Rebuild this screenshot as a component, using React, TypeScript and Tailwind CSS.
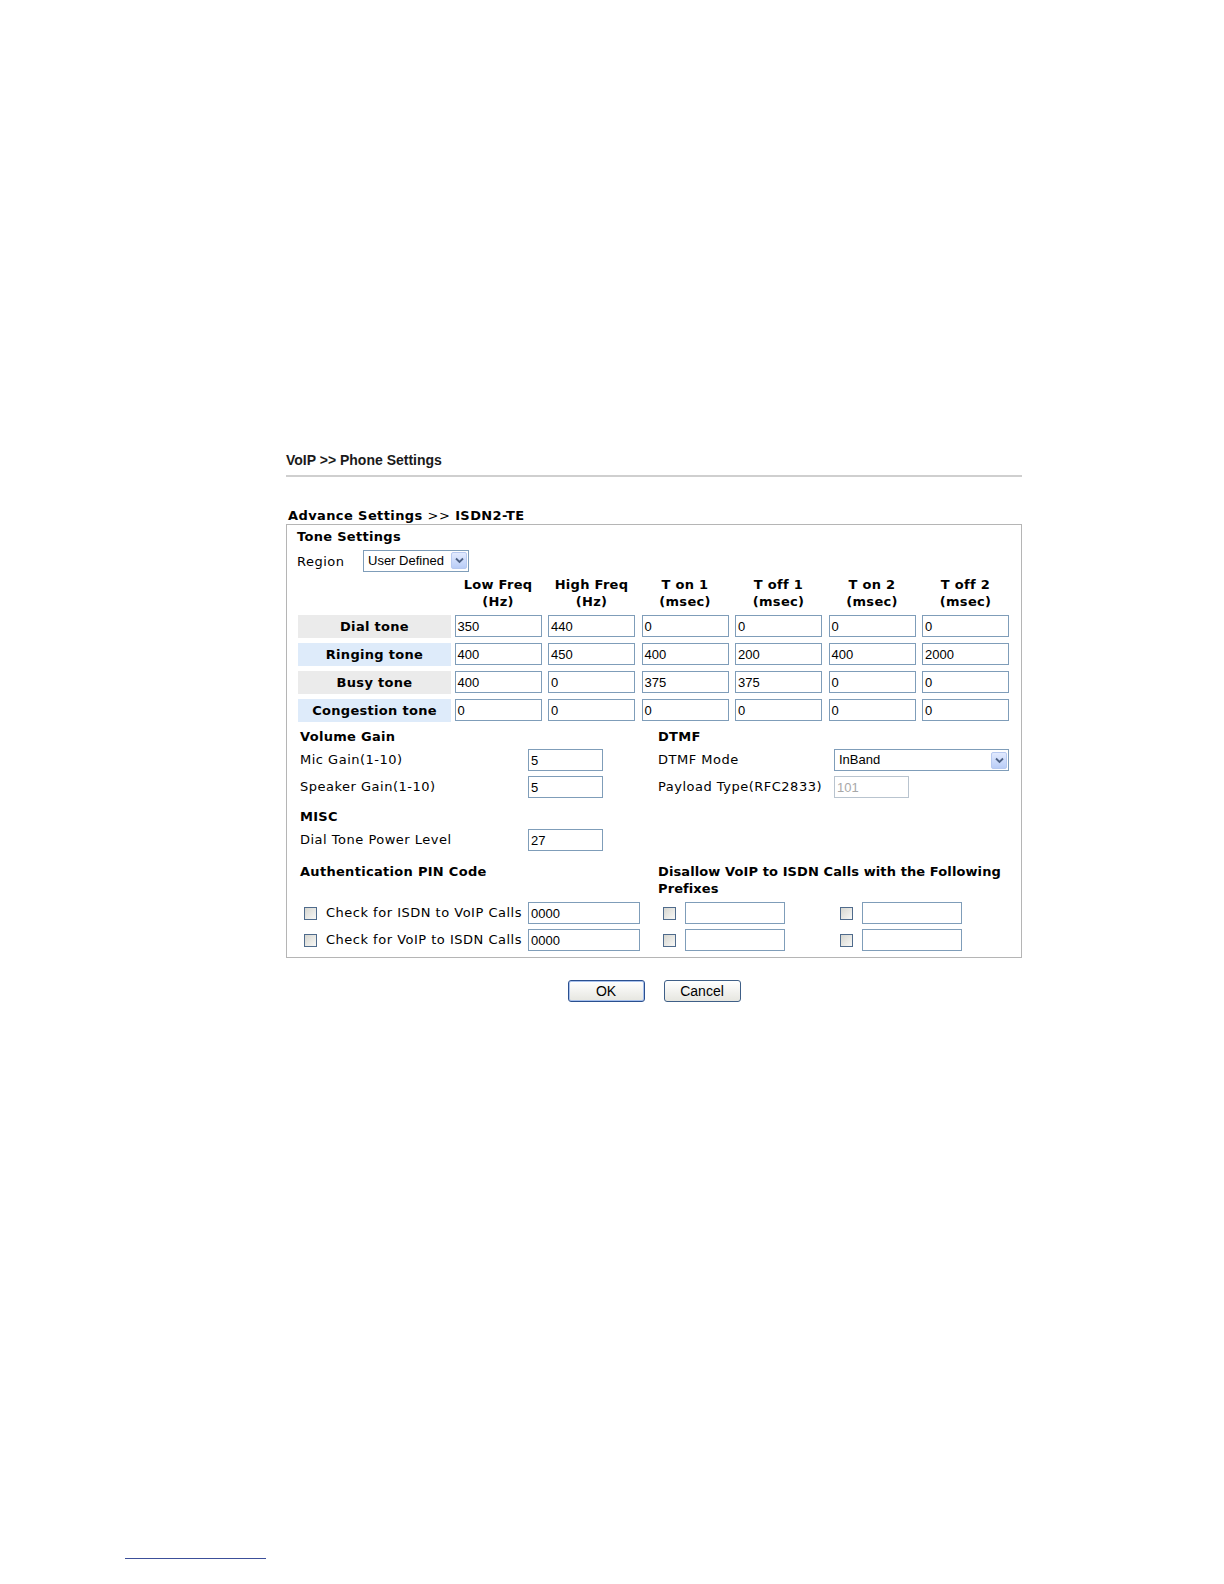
import React from "react";

const sans = { fontFamily: '"DejaVu Sans", Verdana, sans-serif' };

function TextBox({ value, w, disabled }: { value: string; w: string; disabled?: boolean }) {
  return (
    <div
      className={`${w} h-[22px] border bg-white flex items-center pl-[2px] text-[13px] leading-none tracking-normal ${
        disabled ? "border-[#b9c4cf] text-[#a8a8a8]" : "border-[#7f9db9] text-black"
      }`}
      style={{ fontFamily: '"Liberation Sans", Arial, sans-serif' }}
    >
      {value}
    </div>
  );
}

function DropArrow() {
  return (
    <div className="w-[16px] h-[17px] mr-[1px] rounded-[2px] border border-[#b7c9f0] bg-gradient-to-b from-[#e2eafe] to-[#b9cdf7] flex items-center justify-center">
      <svg width="9" height="7" viewBox="0 0 9 7">
        <path d="M1 1.5 L4.5 5 L8 1.5" fill="none" stroke="#4d6185" strokeWidth="1.8" />
      </svg>
    </div>
  );
}

function Select({ value, w }: { value: string; w: string }) {
  return (
    <div
      className={`${w} h-[22px] border border-[#7f9db9] bg-white flex items-center justify-between pl-[4px] text-[13px] tracking-normal`}
      style={{ fontFamily: '"Liberation Sans", Arial, sans-serif' }}
    >
      <span>{value}</span>
      <DropArrow />
    </div>
  );
}

function Check() {
  return <div className="w-[13px] h-[13px] border border-[#4f6b8c] bg-gradient-to-br from-[#d6d6d0] to-[#f8f8f6]" />;
}

function Btn({ label, focus }: { label: string; focus?: boolean }) {
  return (
    <div
      className={`w-[77px] h-[22px] rounded-[3px] border bg-gradient-to-b from-white to-[#e6e6e0] flex items-center justify-center text-[14px] text-black ${
        focus ? "border-[#2a4f8f] shadow-[inset_0_0_0_1px_#a7c0ec]" : "border-[#3f5f87]"
      }`}
      style={{ fontFamily: '"Liberation Sans", Arial, sans-serif' }}
    >
      {label}
    </div>
  );
}

const tones = [
  { name: "Dial tone", bg: "bg-[#ebebeb]", v: ["350", "440", "0", "0", "0", "0"] },
  { name: "Ringing tone", bg: "bg-[#deebfa]", v: ["400", "450", "400", "200", "400", "2000"] },
  { name: "Busy tone", bg: "bg-[#ebebeb]", v: ["400", "0", "375", "375", "0", "0"] },
  { name: "Congestion tone", bg: "bg-[#deebfa]", v: ["0", "0", "0", "0", "0", "0"] },
];

const heads = [
  ["Low Freq", "(Hz)"],
  ["High Freq", "(Hz)"],
  ["T on 1", "(msec)"],
  ["T off 1", "(msec)"],
  ["T on 2", "(msec)"],
  ["T off 2", "(msec)"],
];

export default function App() {
  return (
    <div className="h-[1584px] w-full overflow-hidden bg-white text-black" style={sans}>
      <div className="pt-[451px] pl-[286px] w-[1022px]">
        <div className="text-[14px] font-bold leading-[18px] text-[#1a1a1a]" style={{ fontFamily: '"Liberation Sans", Arial, sans-serif' }}>
          VoIP &gt;&gt; Phone Settings
        </div>
        <div className="mt-[6px] h-[2px] bg-[#cfcfcf] w-[736px]" />

        <div className="mt-[30px] pl-[2px] text-[13px] font-bold leading-[17px] tracking-[0.4px]">
          Advance Settings <span className="font-normal">&gt;&gt;</span> ISDN2-TE
        </div>

        <div className="w-[736px] border border-[#b5b5b5] pl-[10px] pt-[3px] pb-[6px]">
          <div className="text-[13px] font-bold leading-[17px] tracking-[0.3px]">Tone Settings</div>

          <div className="mt-[5px] flex items-center h-[21px] text-[13px] tracking-[0.5px]">
            <span className="w-[66px] pt-[3px]">Region</span>
            <Select value="User Defined" w="w-[106px]" />
          </div>

          <div className="mt-[5px] grid grid-cols-[150px_repeat(6,87px)] gap-x-[6.5px] gap-y-[5px] pl-[1px] tracking-[0.3px]">
            <div />
            {heads.map((h) => (
              <div key={h[0]} className="text-center text-[13px] font-bold leading-[17px]">
                <div>{h[0]}</div>
                <div>{h[1]}</div>
              </div>
            ))}
            {tones.map((t) => (
              <React.Fragment key={t.name}>
                <div className={`${t.bg} h-[23px] flex items-center justify-center text-[13px] font-bold -mr-[3px]`}>
                  {t.name}
                </div>
                {t.v.map((v, i) => (
                  <TextBox key={i} value={v} w="w-[87px]" />
                ))}
              </React.Fragment>
            ))}
          </div>

          <div className="mt-[6px] pl-[3px] grid grid-cols-[358px_1fr] text-[13px] tracking-[0.5px]">
            <div>
              <div className="font-bold leading-[17px] tracking-[0.3px]">Volume Gain</div>
              <div className="mt-[4px] flex items-center">
                <span className="w-[228px]">Mic Gain(1-10)</span>
                <TextBox value="5" w="w-[75px]" />
              </div>
              <div className="mt-[5px] flex items-center">
                <span className="w-[228px]">Speaker Gain(1-10)</span>
                <TextBox value="5" w="w-[75px]" />
              </div>
              <div className="mt-[10px] font-bold leading-[17px] tracking-[0.3px]">MISC</div>
              <div className="mt-[4px] flex items-center">
                <span className="w-[228px]">Dial Tone Power Level</span>
                <TextBox value="27" w="w-[75px]" />
              </div>
            </div>
            <div>
              <div className="font-bold leading-[17px] tracking-[0.3px]">DTMF</div>
              <div className="mt-[4px] flex items-center">
                <span className="w-[176px]">DTMF Mode</span>
                <Select value="InBand" w="w-[175px]" />
              </div>
              <div className="mt-[5px] flex items-center">
                <span className="w-[176px]">Payload Type(RFC2833)</span>
                <TextBox value="101" w="w-[75px]" disabled />
              </div>
            </div>
          </div>

          <div className="mt-[12px] pl-[3px] grid grid-cols-[358px_1fr] text-[13px]">
            <div className="font-bold leading-[17px] tracking-[0.3px]">Authentication PIN Code</div>
            <div className="font-bold leading-[17px] tracking-[0.1px]">
              Disallow VoIP to ISDN Calls with the Following
              <br />
              Prefixes
            </div>
          </div>

          {["Check for ISDN to VoIP Calls", "Check for VoIP to ISDN Calls"].map((lbl) => (
            <div key={lbl} className="mt-[5px] pl-[3px] flex items-center text-[13px] tracking-[0.5px]">
              <div className="w-[358px] flex items-center">
                <div className="ml-[4px] mr-[9px]">
                  <Check />
                </div>
                <span className="w-[202px] whitespace-nowrap">{lbl}</span>
                <TextBox value="0000" w="w-[112px]" />
              </div>
              <div className="flex items-center">
                <div className="ml-[5px] mr-[9px]">
                  <Check />
                </div>
                <TextBox value="" w="w-[100px]" />
                <div className="ml-[55px] mr-[9px]">
                  <Check />
                </div>
                <TextBox value="" w="w-[100px]" />
              </div>
            </div>
          ))}
        </div>

        <div className="mt-[22px] w-[736px] flex justify-center gap-[19px]">
          <Btn label="OK" focus />
          <Btn label="Cancel" />
        </div>
      </div>

      <div className="mt-[556px] ml-[125px] w-[141px] h-[1px] bg-[#3c4f9a]" />
    </div>
  );
}
